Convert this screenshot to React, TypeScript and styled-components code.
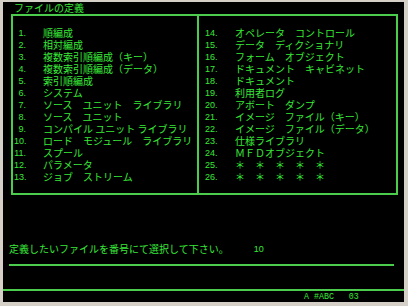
import React from 'react'
import styled, { createGlobalStyle } from 'styled-components'

const GREEN = '#38e838'
const LINE = '#4ccc4c'

const leftItems = [
  { no: '1.', label: '順編成' },
  { no: '2.', label: '相対編成' },
  { no: '3.', label: '複数索引順編成（キー）' },
  { no: '4.', label: '複数索引順編成（データ）' },
  { no: '5.', label: '索引順編成' },
  { no: '6.', label: 'システム' },
  { no: '7.', label: 'ソース　ユニット　ライブラリ' },
  { no: '8.', label: 'ソース　ユニット' },
  { no: '9.', label: 'コンパイル ユニット ライブラリ' },
  { no: '10.', label: 'ロード　モジュール　ライブラリ' },
  { no: '11.', label: 'スプール' },
  { no: '12.', label: 'パラメータ' },
  { no: '13.', label: 'ジョブ　ストリーム' },
]

const rightItems = [
  { no: '14.', label: 'オペレータ　コントロール' },
  { no: '15.', label: 'データ　ディクショナリ' },
  { no: '16.', label: 'フォーム　オブジェクト' },
  { no: '17.', label: 'ドキュメント　キャビネット' },
  { no: '18.', label: 'ドキュメント' },
  { no: '19.', label: '利用者ログ' },
  { no: '20.', label: 'アボート　ダンプ' },
  { no: '21.', label: 'イメージ　ファイル（キー）' },
  { no: '22.', label: 'イメージ　ファイル（データ）' },
  { no: '23.', label: '仕様ライブラリ' },
  { no: '24.', label: 'ＭＦＤオブジェクト' },
  { no: '25.', label: '＊　＊　＊　＊　＊' },
  { no: '26.', label: '＊　＊　＊　＊　＊' },
]

function App() {
  return (
    <>
      <GlobalStyle />
      <Frame>
        <Screen>
          <Title>
            <Label>ファイルの定義</Label>
          </Title>
          <MenuBox>
            <Column $padLeft={1} $gap={17} $divider>
              {leftItems.map((item) => (
                <Row key={item.no}>
                  <Num>{item.no}</Num>
                  <Label>{item.label}</Label>
                </Row>
              ))}
            </Column>
            <Column $padLeft={6} $gap={18}>
              {rightItems.map((item) => (
                <Row key={item.no}>
                  <Num>{item.no}</Num>
                  <Label>{item.label}</Label>
                </Row>
              ))}
            </Column>
          </MenuBox>
          <Prompt>
            <Label>定義したいファイルを番号にて選択して下さい。</Label>
            <Answer>10</Answer>
          </Prompt>
          <InputLine />
          <StatusLine />
          <Status>A #ABC   03</Status>
        </Screen>
      </Frame>
    </>
  )
}

const GlobalStyle = createGlobalStyle`
  html, body {
    margin: 0;
    padding: 0;
    background: #d4d0c8;
  }
`

const Frame = styled.div`
  width: 408px;
  height: 306px;
  box-sizing: border-box;
  padding: 2px 4px 4px 3px;
  background: #d4d0c8;
`

const Screen = styled.div`
  width: 401px;
  height: 300px;
  background: #000;
  display: flex;
  flex-direction: column;
  font-family: "Noto Sans CJK JP", "DejaVu Sans", sans-serif;
  font-size: 10px;
  color: ${GREEN};
  overflow: hidden;
`

const Title = styled.div`
  display: flex;
  height: 12px;
  padding-left: 11px;
`

const MenuBox = styled.div`
  margin: 0 6px 0 8px;
  height: 181px;
  box-sizing: border-box;
  border: 2px solid ${LINE};
  display: flex;
`

const Column = styled.div<{ $padLeft: number; $gap: number; $divider?: boolean }>`
  flex: ${({ $divider }) => ($divider ? '0 0 183px' : '1')};
  border-right: ${({ $divider }) => ($divider ? `2px solid ${LINE}` : 'none')};
  padding: 11px 0 0 ${({ $padLeft }) => $padLeft}px;
  display: flex;
  flex-direction: column;

  & > div {
    gap: ${({ $gap }) => $gap}px;
  }
`

const Row = styled.div`
  display: flex;
  height: 12px;
`

const Num = styled.span`
  display: inline-block;
  width: 12px;
  height: 12px;
  line-height: 12px;
  text-align: right;
  font-family: "Liberation Sans", sans-serif;
  font-size: 9px;
  white-space: pre;
`

const Label = styled.span`
  display: inline-block;
  height: 12px;
  line-height: 12px;
  white-space: pre;
`

const Prompt = styled.div`
  margin-top: 48px;
  padding-left: 6px;
  display: flex;
  gap: 25px;
  height: 12px;
`

const Answer = styled.span`
  display: inline-block;
  height: 12px;
  line-height: 12px;
  font-family: "Liberation Sans", sans-serif;
  font-size: 9px;
`

const InputLine = styled.div`
  margin: 9px 10px 0 6px;
  height: 2px;
  background: ${LINE};
`

const StatusLine = styled.div`
  margin-top: 23px;
  height: 2px;
  background: ${LINE};
`

const Status = styled.div`
  padding-left: 301px;
  height: 10px;
  line-height: 11px;
  font-family: "Liberation Mono", monospace;
  font-size: 8.3px;
  white-space: pre;
`

export default App
